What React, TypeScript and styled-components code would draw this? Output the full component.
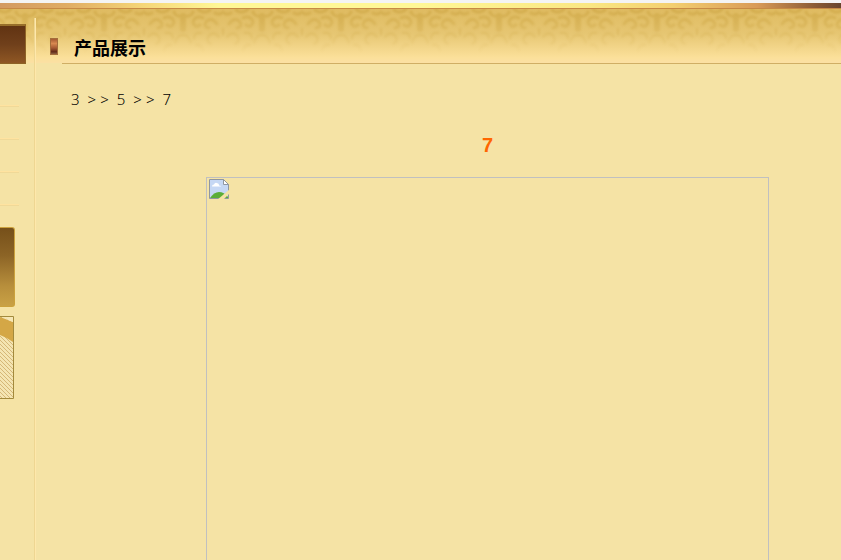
import React from "react";
import styled, { createGlobalStyle } from "styled-components";

const GlobalStyle = createGlobalStyle`
  * { box-sizing: border-box; }
  body { margin: 0; background: #f5e3a5; }
`;

const sans = `"Noto Sans", "Noto Sans CJK SC", sans-serif`;

const Page = styled.div`
  min-height: 100vh;
  display: flex;
  flex-direction: column;
  background: #f5e3a5;
  color: #000;
  font-family: ${sans};
`;

const TopStrip = styled.div`
  height: 9px;
  border-top: 3px solid #f4f4f4;
  border-bottom: 1px solid #c78a45;
  background: linear-gradient(90deg, #d39a62 0, #e0ad64 8%, #f5d678 17%, #fff796 26%, #fff796 50%, #fae783 70%, #f3cf70 80%, #d99b58 90%, #8a5a35 97%, #68452e 100%);
`;

const Body = styled.div`
  position: relative;
  isolation: isolate;
  flex: 1;
  display: grid;
  grid-template-columns: 34px 1fr;
`;

const Backdrop = styled.svg`
  position: absolute;
  inset: 0 0 auto 0;
  width: 100%;
  height: 54px;
  z-index: -1;
`;

const Sidebar = styled.aside`
  padding-top: 15px;
`;

const SideHeading = styled.div`
  width: 26px;
  height: 40px;
  border: 1px solid #8e6325;
  border-left: 0;
  border-top: 2px solid #976e2a;
  background: linear-gradient(#613312, #70401b 50%, #8f5724);
`;

const SideList = styled.ul`
  list-style: none;
  margin: 0 0 22px;
  padding: 9px 0 0;
  width: 19px;
`;

const SideItem = styled.li`
  height: 33px;
  border-bottom: 1px solid #ffe3a0;
  box-shadow: 0 1px 0 #f0d998;
`;

const SidePanel = styled.div`
  width: 15px;
  height: 80px;
  margin-bottom: 9px;
  border: 1px solid #cba13c;
  border-left: 0;
  border-radius: 0 3px 3px 0;
  background: linear-gradient(#76501a, #8c6426 35%, #b88f3c 75%, #c9a145);
`;

const SidePicture = styled.svg`
  display: block;
  width: 14px;
  height: 83px;
`;

const Content = styled.main`
  display: flex;
  flex-direction: column;
  margin-top: 9px;
  border-left: 1px solid #eed692;
  box-shadow: inset 1px 0 0 #ffe8ab;
`;

const SectionHeader = styled.header`
  height: 46px;
  margin-left: 27px;
  padding-top: 12px;
  display: flex;
  align-items: center;
  border-bottom: 1px solid #cfae65;
`;

const Marker = styled.span`
  flex: none;
  width: 8px;
  height: 17px;
  margin: 0 16px 0 -12px;
  border: 1px solid #a36d3b;
  background: linear-gradient(#a55a32, #d88950 30%, #a65a33 60%, #622a18 85%, #8d6040);
`;

const SectionTitle = styled.h1`
  margin: 0;
  font: 700 18px/26px "Noto Sans CJK SC", sans-serif;
`;

const Breadcrumb = styled.nav`
  display: flex;
  gap: 8px;
  padding: 24px 0 0 36px;
  font-size: 15px;
  line-height: 22px;
`;

const Crumb = styled.a`
  color: inherit;
  font-weight: 300;
  text-decoration: none;
`;

const Separator = styled.span`
  display: flex;
  gap: 4px;
  font-size: 15px;
  font-weight: 300;
`;

const Product = styled.article`
  flex: 1;
  display: flex;
  flex-direction: column;
  padding: 20px 72px 0 171px;
`;

const ProductName = styled.h2`
  margin: 0 0 17px;
  color: #ff6600;
  font: 700 20px/30px "Liberation Sans", sans-serif;
  text-align: center;
`;

const MissingImage = styled.div`
  flex: 1;
  min-height: 320px;
  padding: 1px 2px;
  border: 1px solid #c0c0c0;
  border-bottom: 0;
`;

function Damask() {
  return (
    <Backdrop aria-hidden="true">
      <defs>
        <linearGradient id="gold" x1="0" y1="0" x2="0" y2="1">
          <stop offset="0" stopColor="#dfbb61" />
          <stop offset=".45" stopColor="#e6c672" />
          <stop offset=".9" stopColor="#fbe09a" />
          <stop offset="1" stopColor="#fbe0a4" />
        </linearGradient>
        <linearGradient id="fade" x1="0" y1="0" x2="0" y2="1">
          <stop offset="0" stopColor="#fff" />
          <stop offset=".85" stopColor="#000" />
        </linearGradient>
        <mask id="fadeMask">
          <rect width="100%" height="54" fill="url(#fade)" />
        </mask>
        <filter id="soft">
          <feGaussianBlur stdDeviation="1.1" />
        </filter>
        <pattern id="scrolls" x="302" y="0" width="79" height="54" patternUnits="userSpaceOnUse">
          <g fill="none" stroke="#c79f3b" strokeWidth="3" strokeLinecap="round" filter="url(#soft)">
            <path d="M-2 2q5 5 10 2M13 1q6 5 12-1M6 15q6-8 11-2q3 5-3 6M20 9q8-3 10 4q-2 7-7 3M30 3q2 5 7 4M81 2q-5 5-10 2M66 1q-6 5-12-1M73 15q-6-8-11-2q-3 5 3 6M59 9q-8-3-10 4q2 7 7 3M49 3q-2 5-7 4" />
            <path d="M39 7v13" strokeWidth="6" />
            <path d="M4 28q6-7 11 0q2 5-3 7M22 24q7-1 7 6M31 34q2-8 8-8q6 0 8 8M57 24q-7-1-7 6M75 28q-6-7-11 0q-2 5 3 7M20 42q2-7 7-6M59 42q-2-7-7-6M0 20v6M79 20v6" strokeWidth="2" />
          </g>
        </pattern>
      </defs>
      <rect width="100%" height="54" fill="url(#gold)" />
      <rect width="100%" height="54" fill="url(#scrolls)" mask="url(#fadeMask)" opacity=".5" />
    </Backdrop>
  );
}

function WovenPicture() {
  return (
    <SidePicture viewBox="0 0 14 83" aria-hidden="true">
      <defs>
        <pattern id="weave" width="4" height="4" patternUnits="userSpaceOnUse">
          <rect width="4" height="4" fill="#f4e5b2" />
          <path d="M0 0l4 4M-1 3l2 2M3-1l2 2" stroke="#d5b777" strokeWidth="1" />
        </pattern>
      </defs>
      <rect width="14" height="83" fill="url(#weave)" />
      <path d="M0 1l13 5v20Q8 22 0 19z" fill="#d4a746" />
      <path d="M4 1h9v5Q8 5 4 1z" fill="#f6e7b5" />
      <path d="M0 .5h13.500v82H0" fill="none" stroke="#a38a3c" />
    </SidePicture>
  );
}

function BrokenImageIcon() {
  return (
    <svg width="21" height="21" viewBox="0 0 21 21" display="block" aria-hidden="true">
      <path d="M.5.5h14l5 5v14H.5z" fill="#c6d8f4" stroke="#9097a0" />
      <path d="M3 7.500q0-2 2-2q1-3 4-1q1 0 1 2q2 0 2 1z" fill="#fff" />
      <path d="M1 19q4-6 9-6t9 5v1z" fill="#5bad38" />
      <path d="M14.500.5v5h5z" fill="#fff" stroke="#9097a0" />
      <path d="M8 21L21 10v4L14 21z" fill="#f5e3a5" />
    </svg>
  );
}

const Divider = () => (
  <Separator aria-hidden="true">
    <span>&gt;</span>
    <span>&gt;</span>
  </Separator>
);

export default function App() {
  return (
    <Page>
      <GlobalStyle />
      <TopStrip />
      <Body>
        <Damask />
        <Sidebar>
          <SideHeading />
          <SideList>
            <SideItem />
            <SideItem />
            <SideItem />
            <SideItem />
          </SideList>
          <SidePanel />
          <WovenPicture />
        </Sidebar>
        <Content>
          <SectionHeader>
            <Marker />
            <SectionTitle>产品展示</SectionTitle>
          </SectionHeader>
          <Breadcrumb aria-label="Breadcrumb">
            <Crumb href="#3">3</Crumb>
            <Divider />
            <Crumb href="#5">5</Crumb>
            <Divider />
            <Crumb href="#7">7</Crumb>
          </Breadcrumb>
          <Product>
            <ProductName>7</ProductName>
            <MissingImage>
              <BrokenImageIcon />
            </MissingImage>
          </Product>
        </Content>
      </Body>
    </Page>
  );
}
